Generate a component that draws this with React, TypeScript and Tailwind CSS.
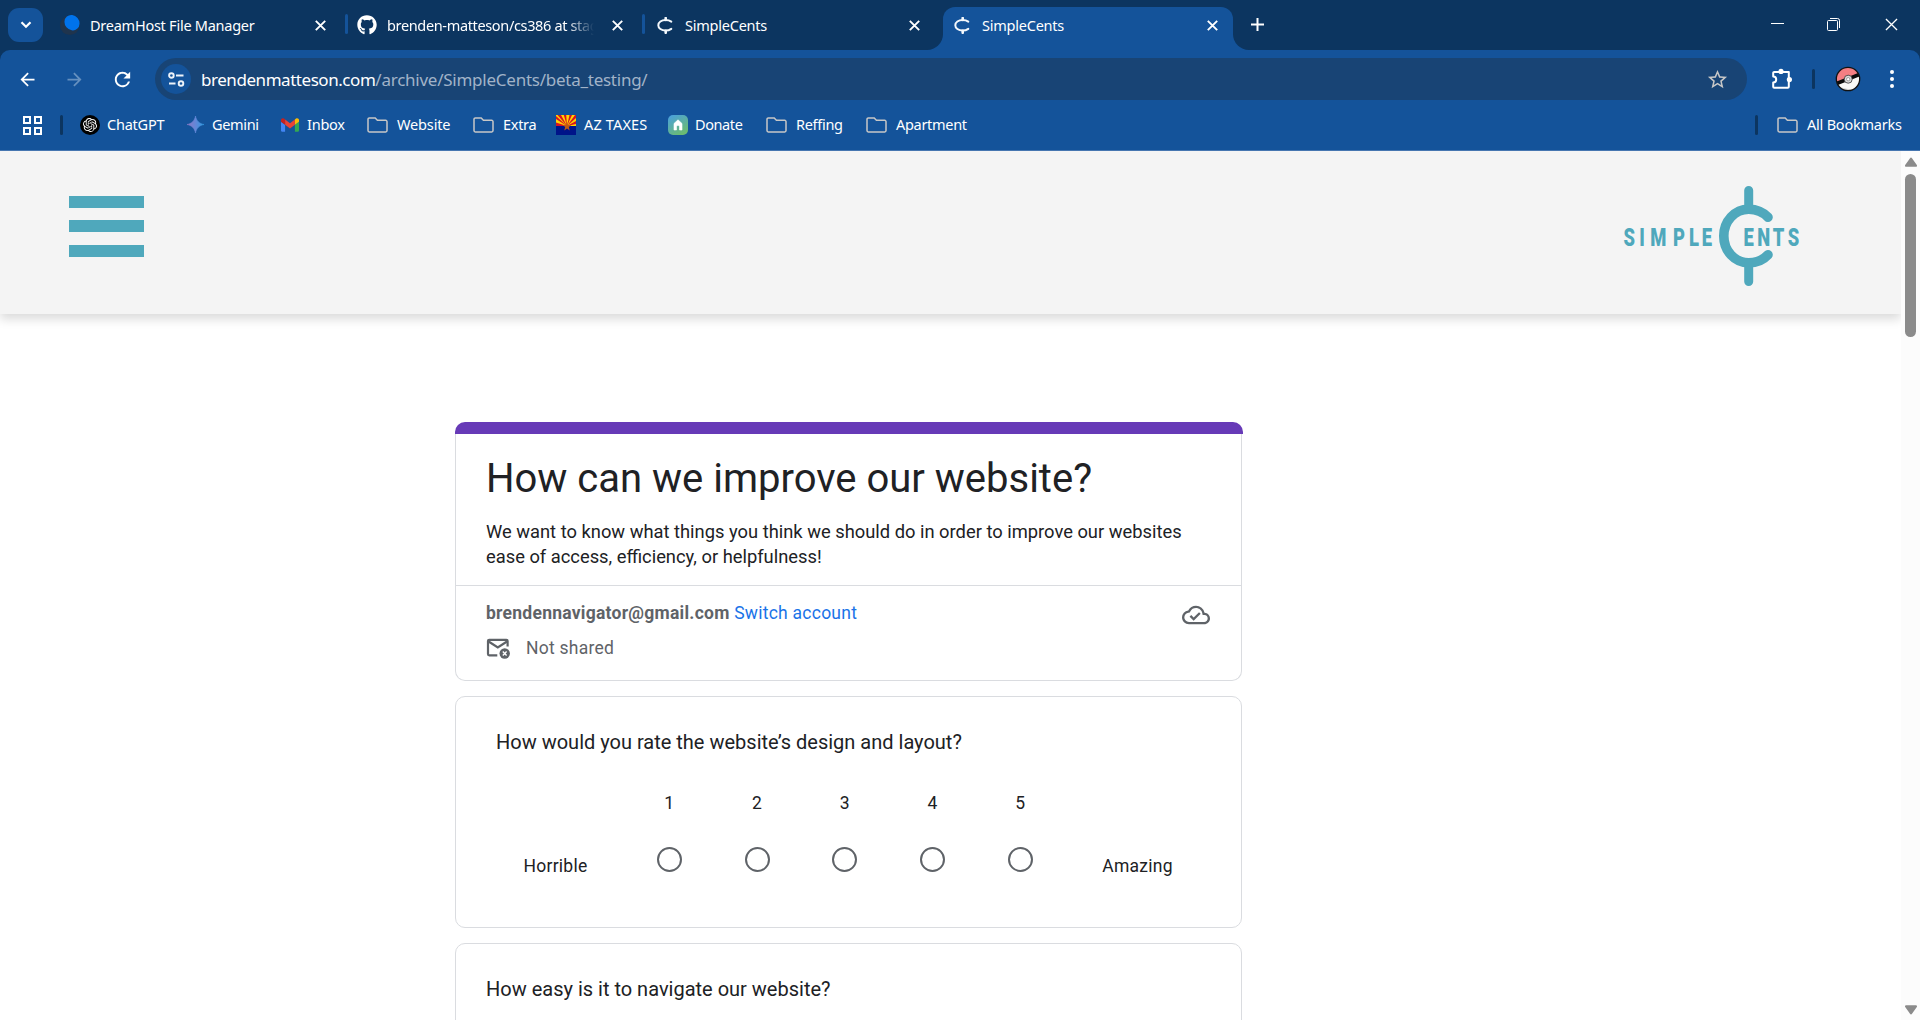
import type { ReactNode } from "react";
import { FaGithub } from "react-icons/fa";
import { SiOpenai } from "react-icons/si";
import { MdArrowBack, MdArrowForward, MdOutlineCloudDone, MdRefresh, MdStarBorder } from "react-icons/md";

/* ---------- icons ---------- */

function Cross({ className }: { className: string }) {
  return (
    <svg viewBox="0 0 11 11" className={className} fill="none" stroke="currentColor">
      <path d="M0.8 0.8 10.2 10.2M10.2 0.8 0.8 10.2" />
    </svg>
  );
}

function DreamHostIcon() {
  return (
    <svg viewBox="0 0 20 20" className="size-5">
      <circle cx="9.8" cy="10.3" r="9.7" fill="#1f344d" />
      <ellipse cx="12" cy="7.7" rx="7.2" ry="8" transform="rotate(-40 12 7.7)" fill="#0073ec" />
    </svg>
  );
}

function CentIcon() {
  return (
    <svg viewBox="0 0 16 17" className="h-[17px] w-4" fill="none" stroke="#f4f8fc" strokeWidth="2" strokeLinecap="round">
      <path d="M14.3 4.6C12.6 3.4 10.7 3 8.6 3 4.4 3 1.3 5.2 1.3 8.2s3.1 5.4 7.3 5.4c2.100 0 4-.5 5.700-1.700" />
      <path d="M8.700 1v2M8.700 13.800v2" strokeWidth="2.600" />
    </svg>
  );
}

function SiteInfoIcon() {
  return (
    <svg viewBox="0 0 17 15" className="h-[15px] w-[17px]" fill="none" stroke="#eef3f9" strokeWidth="1.9">
      <circle cx="3.400" cy="3.500" r="2.300" />
      <path d="M8 3.500h7.500M1 11.500h6.500" />
      <circle cx="13" cy="11.500" r="2.300" />
    </svg>
  );
}

function PuzzleIcon() {
  return (
    <svg viewBox="0 0 22 22" className="size-[22px]">
      <path
        d="M3.200 4h14.600v14.800a1 1 0 0 1-1 1H3.200a1 1 0 0 1-1-1v-4.300a3 3 0 0 0 0-6V5a1 1 0 0 1 1-1z"
        fill="none"
        stroke="#fff"
        strokeWidth="2"
        strokeLinejoin="round"
      />
      <circle cx="10" cy="3.400" r="2.600" fill="#fff" />
      <circle cx="18.400" cy="11.600" r="2.600" fill="#fff" />
    </svg>
  );
}

function PokeballAvatar() {
  return (
    <svg viewBox="0 0 26 26" className="size-[26px]">
      <defs>
        <clipPath id="ball">
          <circle cx="13" cy="13" r="11.600" />
        </clipPath>
      </defs>
      <g clipPath="url(#ball)">
        <rect width="26" height="26" fill="#f9f9f7" />
        <path d="M0 20 26 26H0z" fill="#d5d7d6" />
        <path d="M-2 18.500 28 6.500V-2H-2z" fill="#f57f83" />
        <path d="M-2 19 28 7" stroke="#0b0b0b" strokeWidth="3.600" />
      </g>
      <circle cx="13" cy="13" r="11.700" fill="none" stroke="#111" strokeWidth="1.300" />
      <circle cx="13.200" cy="13.200" r="4" fill="#dcdcdc" stroke="#333" strokeWidth="0.800" />
      <circle cx="13.200" cy="13.200" r="1.700" fill="#fff" stroke="#888" strokeWidth="0.800" />
    </svg>
  );
}

function FolderIcon() {
  return (
    <svg viewBox="0 0 21 16" className="h-4 w-[21px]" fill="none" stroke="#c7c7c7" strokeWidth="1.500">
      <path d="M2.300 1h5.900l2.200 2.300h8.300a1.300 1.300 0 0 1 1.300 1.300v9a1.300 1.300 0 0 1-1.300 1.300H2.300A1.300 1.300 0 0 1 1 13.600V2.300A1.300 1.300 0 0 1 2.300 1z" />
    </svg>
  );
}

function GeminiIcon() {
  return (
    <svg viewBox="0 0 17 17" className="size-[17px]">
      <defs>
        <linearGradient id="gem" x1="0" y1="0" x2="1" y2="0">
          <stop offset="0" stopColor="#8d78c4" />
          <stop offset="0.500" stopColor="#6387d8" />
          <stop offset="1" stopColor="#2f9ae0" />
        </linearGradient>
      </defs>
      <path d="M8.500 0c.6 4.400 4.100 7.900 8.500 8.500-4.400.6-7.900 4.100-8.500 8.500C7.900 12.600 4.400 9.100 0 8.500 4.400 7.900 7.900 4.400 8.500 0z" fill="url(#gem)" stroke="url(#gem)" strokeWidth="0.600" />
    </svg>
  );
}

function GmailIcon() {
  return (
    <svg viewBox="52 42 88 66" className="h-[14px] w-[18px]">
      <path fill="#4285f4" d="M58 108h14V74L52 59v43c0 3.320 2.690 6 6 6" />
      <path fill="#34a853" d="M120 108h14c3.320 0 6-2.690 6-6V59l-20 15" />
      <path fill="#fbbc04" d="M120 48v26l20-15v-8c0-7.420-8.470-11.650-14.400-7.200" />
      <path fill="#ea4335" d="M72 74V48l24 18 24-18v26L96 92" />
      <path fill="#c5221f" d="M52 51v8l20 15V48l-5.600-4.200c-5.940-4.450-14.400-.22-14.400 7.200" />
    </svg>
  );
}

function ArizonaFlag() {
  return (
    <svg viewBox="0 0 20 20" className="size-5">
      <rect width="20" height="11" fill="#ffd400" />
      <path
        fill="#d81324"
        d="M11 11 0 11V7.500zM11 11 0 4V1zM11 11 1.500 0h3.500zM11 11 7.800 0h2.400zM11 11 13.500 0H16zM11 11 19 0h1v3zM11 11 20 6v3z"
      />
      <rect y="11" width="20" height="9" fill="#001489" />
      <path d="m11 6.800 1.100 3.100 3.300.1-2.600 2.100.9 3.300-2.700-1.900-2.700 1.900.9-3.300L6.600 10l3.300-.1z" fill="#c35a12" />
    </svg>
  );
}

function DonateIcon() {
  return (
    <svg viewBox="0 0 20 20" className="size-5">
      <defs>
        <linearGradient id="don" x1="0" y1="0" x2="0.600" y2="1">
          <stop offset="0" stopColor="#489fe3" />
          <stop offset="1" stopColor="#6bbb72" />
        </linearGradient>
      </defs>
      <rect width="20" height="20" rx="5" fill="url(#don)" />
      <path d="M10 4.800 14 8.500V15h-2.500v-3.200a1.500 1.500 0 0 0-3 0V15H6V8.500z" fill="#fff" stroke="#fff" strokeWidth="0.600" strokeLinejoin="round" />
    </svg>
  );
}

function MailOffIcon() {
  return (
    <svg viewBox="0 0 24 21" className="h-[21px] w-6">
      <path d="M11.300 17.300H3.200A1.200 1.200 0 0 1 2 16.100V3a1.200 1.200 0 0 1 1.200-1.200h17.200A1.200 1.200 0 0 1 21.600 3v5.500" fill="none" stroke="#5f6368" strokeWidth="2.200" />
      <path d="m2.600 3.500 9.200 6 9.200-6" fill="none" stroke="#5f6368" strokeWidth="2.200" />
      <circle cx="18.700" cy="15.500" r="5.200" fill="#5f6368" />
      <path d="m16.800 13.600 3.800 3.800m0-3.800-3.800 3.800" stroke="#fff" strokeWidth="1.400" />
    </svg>
  );
}

function SimpleCentsLogo() {
  return (
    <svg viewBox="1616 180 190 112" className="h-28 w-[190px]">
      <g fill="none" stroke="#4fa8bc" strokeLinecap="round">
        <path
          d="M1768 217.300C1763 211.800 1756 209.200 1748.700 209.200 1734.800 209.200 1723.800 221 1723.800 236s11 26.800 24.900 26.800c7.300 0 14.300-2.600 19.300-8.100"
          strokeWidth="9.600"
        />
        <path d="M1748.700 190.500V208M1748.700 264v17.500" strokeWidth="9" />
      </g>
      <g fill="#4fa8bc" className="font-[Roboto] text-[25.500px] font-black" transform="translate(0 246) scale(0.720 1)">
        <text x="2255 2276.700 2292 2323.600 2345.800 2363.400">SIMPLE</text>
        <text x="2421.500 2440.500 2462 2483">ENTS</text>
      </g>
    </svg>
  );
}

/* ---------- browser chrome ---------- */

function Tab({ icon, title, titleClass, active }: { icon: ReactNode; title: string; titleClass: string; active?: boolean }) {
  return (
    <div
      className={
        active
          ? "relative flex h-[43px] w-[290px] items-center rounded-t-xl bg-[#14539a] pr-[15px] pb-[7px] pl-[9px]"
          : "flex h-[43px] w-[297px] items-center pr-[19px] pb-[7px] pl-3"
      }
    >
      {active && (
        <>
          <span className="absolute bottom-0 -left-4 size-4 rounded-br-2xl shadow-[5px_5px_0_4px_#14539a] [clip-path:inset(0)]" />
          <span className="absolute -right-4 bottom-0 size-4 rounded-bl-2xl shadow-[-5px_5px_0_4px_#14539a] [clip-path:inset(0)]" />
        </>
      )}
      <span className="flex w-[30px] shrink-0 items-center">{icon}</span>
      <span className={"pt-0.5 " + titleClass}>{title}</span>
      <Cross className="ml-auto size-[11px] shrink-0 stroke-[1.900]" />
    </div>
  );
}

function Separator({ className }: { className: string }) {
  return <span className={"h-5 w-[3px] shrink-0 rounded-full " + className} />;
}

function TabStrip() {
  return (
    <div className="flex h-[50px] shrink-0 items-start pt-[7px]">
      <button className="mt-px ml-2 flex h-[34px] w-[35px] items-center justify-center rounded-[11px] bg-[#14539a]">
        <svg viewBox="0 0 12 8" className="h-2 w-3" fill="none" stroke="#fff" strokeWidth="2.200">
          <path d="m1.500 1.200 4.500 4.500 4.500-4.500" />
        </svg>
      </button>
      <div className="ml-[5px] flex">
        <Tab icon={<DreamHostIcon />} title="DreamHost File Manager" titleClass="whitespace-nowrap text-[14.500px] tracking-[-0.250px]" />
        <Separator className="mt-[7px] -mr-[3px] bg-[#14539a]" />
        <Tab
          icon={<FaGithub className="size-5" />}
          title="brenden-matteson/cs386 at stage"
          titleClass="w-[209px] overflow-hidden whitespace-nowrap text-[14.500px] tracking-[-0.350px] [mask-image:linear-gradient(to_right,#000_86%,transparent_99%)]"
        />
        <Separator className="mt-[7px] -mr-[3px] bg-[#14539a]" />
        <Tab icon={<span className="ml-[3px]"><CentIcon /></span>} title="SimpleCents" titleClass="ml-px whitespace-nowrap text-[14.500px] tracking-[-0.230px]" />
        <span className="w-1" />
        <Tab active icon={<span className="ml-0.5"><CentIcon /></span>} title="SimpleCents" titleClass="whitespace-nowrap text-[14.500px] tracking-[-0.230px]" />
      </div>
      <svg viewBox="0 0 13 13" className="mt-[11px] ml-[18px] size-[13px]" stroke="#fff" strokeWidth="2">
        <path d="M6.500 0v13M0 6.500h13" />
      </svg>
      <div className="mt-[11px] mr-[22px] ml-auto flex items-center">
        <span className="mb-0.5 h-px w-[13px] bg-white" />
        <svg viewBox="0 0 13 13" className="ml-[43px] size-[13px]" fill="none" stroke="#fff">
          <path d="M3 .5h7.500a2 2 0 0 1 2 2V10" />
          <rect x="0.500" y="2.500" width="10" height="10" rx="1" />
        </svg>
        <Cross className="ml-[45px] size-[13px] stroke-[1.100]" />
      </div>
    </div>
  );
}

function Toolbar() {
  return (
    <div className="flex h-[58px] shrink-0 items-center rounded-t-[10px] bg-[#14539a] pr-[26px] pl-[17px]">
      <MdArrowBack className="size-[21px]" />
      <MdArrowForward className="ml-[26px] size-[21px] text-[#6590bf]" />
      <MdRefresh className="ml-[26px] size-[23px]" />
      <div className="ml-[21px] flex h-[42px] w-[1592px] items-center rounded-full bg-[#184475] pr-[18px] pl-[6px]">
        <span className="flex size-[30px] items-center justify-center rounded-full bg-[#14539a]">
          <SiteInfoIcon />
        </span>
        <span className="ml-[10px] pt-px text-[17px] tracking-[-0.450px]">brendenmatteson.com</span>
        <span className="pt-px text-[17px] tracking-[-0.250px] text-[#a1b3c8]">/archive/SimpleCents/beta_testing/</span>
        <MdStarBorder className="ml-auto size-[23px] text-[#c7c7c7]" />
      </div>
      <span className="ml-6">
        <PuzzleIcon />
      </span>
      <Separator className="ml-[19px] bg-[#0c3560]" />
      <span className="ml-[20px]">
        <PokeballAvatar />
      </span>
      <div className="ml-auto flex flex-col gap-[3px]">
        <span className="size-1 rounded-full bg-white" />
        <span className="size-1 rounded-full bg-white" />
        <span className="size-1 rounded-full bg-white" />
      </div>
    </div>
  );
}

function Bookmark({ icon, label, width, gap, text }: { icon: ReactNode; label: string; width: string; gap: string; text: string }) {
  return (
    <div className={"flex shrink-0 items-center whitespace-nowrap text-[14.500px] " + width + " " + gap}>
      {icon}
      <span className={text}>{label}</span>
    </div>
  );
}

function BookmarksBar() {
  return (
    <div className="flex h-[42px] shrink-0 items-center bg-[#14539a] pr-[17px] pb-[9px] pl-[23px]">
      <div className="mt-px grid grid-cols-2 gap-[3px]">
        <span className="size-2 border-2 border-white" />
        <span className="size-2 border-2 border-white" />
        <span className="size-2 border-2 border-white" />
        <span className="size-2 border-2 border-white" />
      </div>
      <Separator className="mr-[17px] ml-[18px] bg-[#0c3560]" />
      <Bookmark
        icon={
          <span className="flex size-5 items-center justify-center rounded-full bg-black">
            <SiOpenai className="size-[14px]" />
          </span>
        }
        label="ChatGPT"
        width="w-[107px]"
        gap="gap-[7px]"
        text="tracking-[-0.220px]"
      />
      <Bookmark icon={<GeminiIcon />} label="Gemini" width="w-[94px]" gap="gap-[8px]" text="tracking-[-0.350px]" />
      <Bookmark icon={<GmailIcon />} label="Inbox" width="w-[86px]" gap="gap-[8px]" text="tracking-[-0.250px]" />
      <Bookmark icon={<FolderIcon />} label="Website" width="w-[106px]" gap="gap-[9px]" text="tracking-[-0.150px]" />
      <Bookmark icon={<FolderIcon />} label="Extra" width="w-[83px]" gap="gap-[9px]" text="tracking-[-0.300px]" />
      <Bookmark icon={<ArizonaFlag />} label="AZ TAXES" width="w-[112px]" gap="gap-[8px]" text="tracking-[0.150px]" />
      <Bookmark icon={<DonateIcon />} label="Donate" width="w-[98px]" gap="gap-[7px]" text="tracking-[-0.400px]" />
      <Bookmark icon={<FolderIcon />} label="Reffing" width="w-[100px]" gap="gap-[9px]" text="tracking-[-0.300px]" />
      <Bookmark icon={<FolderIcon />} label="Apartment" width="w-[120px]" gap="gap-[9px]" text="tracking-[-0.300px]" />
      <Separator className="mr-[19px] ml-auto bg-[#0c3560]" />
      <Bookmark icon={<FolderIcon />} label="All Bookmarks" width="w-[126px]" gap="gap-[9px]" text="tracking-[-0.220px]" />
    </div>
  );
}

/* ---------- page ---------- */

function SiteHeader() {
  return (
    <header className="flex h-[163px] shrink-0 items-start justify-between bg-[#f4f4f4] pr-[95px] pl-[69px] shadow-[0_5px_10px_rgba(0,0,0,0.150)]">
      <div className="mt-[45px] w-[75px]">
        <div className="h-3 bg-[#4fa8bc]" />
        <div className="mt-3 h-3 bg-[#4fa8bc]" />
        <div className="mt-[13px] h-3 bg-[#4fa8bc]" />
      </div>
      <div className="mt-[29px]">
        <SimpleCentsLogo />
      </div>
    </header>
  );
}

function SurveyIntro() {
  return (
    <section>
      <div className="h-3 w-[788px] rounded-t-[10px] bg-[#673ab7]" />
      <div className="h-[247px] w-[787px] rounded-b-[10px] border border-t-0 border-[#dadce0]">
        <div className="h-[152px] border-b border-[#dadce0] pt-[20px] pl-[30px]">
          <h1 className="text-[40px] leading-[50px] text-[#202124]">How can we improve our website?</h1>
          <p className="mt-[15px] w-[725px] text-[18.330px] leading-[25px] text-[#202124]">
            We want to know what things you think we should do in order to improve our websites ease of access, efficiency, or helpfulness!
          </p>
        </div>
        <div className="flex justify-between pt-[15px] pr-[31px] pl-[30px] text-[17.500px] leading-6 tracking-[0.250px] text-[#5f6368]">
          <div>
            <div>
              <span className="font-bold">brendennavigator@gmail.com</span> <a className="text-[#1a73e8]">Switch account</a>
            </div>
            <div className="mt-[11px] flex items-center gap-[16px]">
              <MailOffIcon />
              <span>Not shared</span>
            </div>
          </div>
          <MdOutlineCloudDone className="size-7" />
        </div>
      </div>
    </section>
  );
}

function RatingQuestion() {
  return (
    <section className="mt-[15px] h-[232px] w-[787px] rounded-[10px] border border-[#dadce0] px-[40px] pt-[30px] text-[#202124]">
      <h2 className="text-[20px] leading-[30px]">How would you rate the website’s design and layout?</h2>
      <div className="mt-[34px] flex text-[17.500px] leading-[25px] tracking-[0.250px]">
        <span className="w-[129.500px] pt-[63px] pl-[27.500px]">Horrible</span>
        {["1", "2", "3", "4", "5"].map((n) => (
          <label key={n} className="flex w-[87.750px] flex-col items-center">
            <span>{n}</span>
            <span className="mt-[31px] size-[25px] rounded-full border-2 border-[#5f6368]" />
          </label>
        ))}
        <span className="pt-[63px] pl-[38px]">Amazing</span>
      </div>
    </section>
  );
}

function Scrollbar() {
  return (
    <div className="flex w-[19px] shrink-0 flex-col items-center bg-[#fcfcfc] pt-1.5 pb-[5px]">
      <svg viewBox="0 0 12 10" className="h-[10px] w-3" fill="#8b8b8b">
        <path d="M5 1.200a1.200 1.200 0 0 1 2 0l4.800 6.900a1 1 0 0 1-.9 1.600H1.100a1 1 0 0 1-.9-1.600z" />
      </svg>
      <span className="mt-[7px] h-[163px] w-[11px] rounded-full bg-[#8b8b8b]" />
      <svg viewBox="0 0 12 10" className="mt-auto h-[10px] w-3" fill="#8b8b8b">
        <path d="M5 8.800a1.200 1.200 0 0 0 2 0l4.800-6.900a1 1 0 0 0-.9-1.600H1.100a1 1 0 0 0-.9 1.600z" />
      </svg>
    </div>
  );
}

export default function App() {
  return (
    <div className="flex h-[1020px] w-[1920px] flex-col overflow-hidden bg-[#0c3560] font-['Noto_Sans',sans-serif] text-white">
      <TabStrip />
      <Toolbar />
      <BookmarksBar />
      <div className="h-px shrink-0 bg-[#4676b0]" />
      <div className="flex min-h-0 flex-1 bg-white font-[Roboto,sans-serif]">
        <main className="flex flex-1 flex-col overflow-hidden">
          <SiteHeader />
          <div className="flex flex-col pt-[108px] pl-[455px]">
            <SurveyIntro />
            <RatingQuestion />
            <section className="mt-[15px] h-[233px] w-[787px] rounded-[10px] border border-[#dadce0] px-[30px] pt-[30px]">
              <h2 className="text-[20px] leading-[30px] text-[#202124]">How easy is it to navigate our website?</h2>
            </section>
          </div>
        </main>
        <Scrollbar />
      </div>
    </div>
  );
}
